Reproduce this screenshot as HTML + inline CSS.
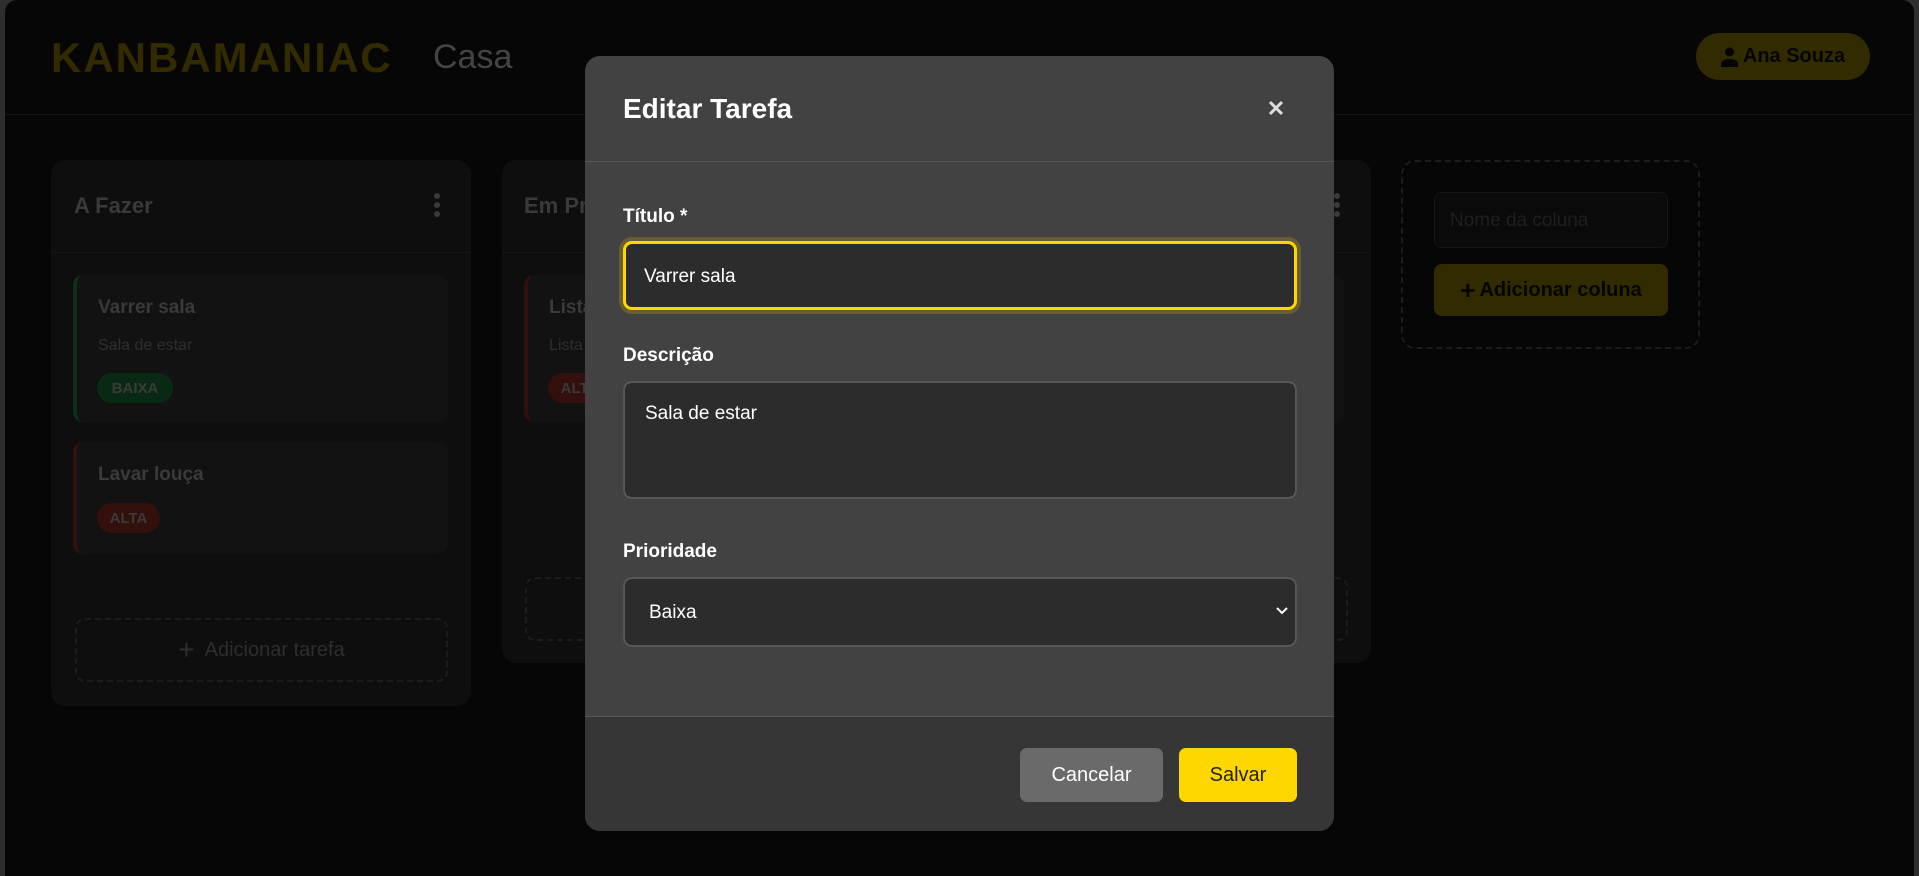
<!DOCTYPE html>
<html><head><meta charset="utf-8"><style>
*{box-sizing:border-box;margin:0;padding:0}
body{width:1919px;height:876px;background:#2e2e2e;font-family:"Liberation Sans",sans-serif;position:relative;overflow:hidden}
.app{position:absolute;left:5px;top:0;width:1909px;height:876px;background:#060606;border-radius:12px 12px 0 0}
.a{position:absolute}
.hline{left:5px;top:114px;width:1909px;height:1px;background:#121212}
.logo{left:51px;top:34px;font-size:42px;font-weight:bold;color:#332b00;letter-spacing:2px}
.casa{left:433px;top:38px;font-size:34px;color:#444}
.user{left:1696px;top:33px;width:174px;height:47px;border-radius:24px;background:#332b00;color:#050505;font-weight:bold;font-size:20px;display:flex;align-items:center;justify-content:center;gap:5px}
.col{background:#0e0e0e;border-radius:14px}
.ch{font-size:22px;font-weight:bold;color:#3a3a3a}
.dots{width:6px}
.dots i{display:block;width:6px;height:6px;border-radius:3px;background:#3a3a3a;margin-bottom:3px}
.div{height:1px;background:#151515}
.card{background:#121212;border-radius:10px;border-left:4px solid #08301a}
.ct{font-size:19px;font-weight:bold;color:#3a3a3a}
.cd{font-size:16px;color:#2e2e2e}
.badge{border-radius:15px;font-size:15px;font-weight:bold;color:#3a3a3a;display:flex;align-items:center;justify-content:center}
.dash{border:2px dashed #1c1c1c;border-radius:10px}
.modal{left:585px;top:56px;width:749px;height:775px;background:#424242;border-radius:15px;overflow:hidden}
.mfoot{left:0;top:660px;width:749px;height:115px;background:#363636;border-top:1px solid #555}
.lbl{font-size:19px;font-weight:bold;color:#fff}
.inp{background:#2c2c2c;border:2px solid #575757;border-radius:9px;color:#fff;font-size:19px}
.btn{border-radius:7px;font-size:20px;display:flex;align-items:center;justify-content:center}
</style></head><body>
<div class="app"></div>
<div class="a hline"></div>
<div class="a logo">KANBAMANIAC</div>
<div class="a casa">Casa</div>
<div class="a user"><svg width="17" height="20" viewBox="0 0 17 20"><circle cx="8.5" cy="5" r="4.5" fill="#050505"/><path d="M0 20v-3c0-3 3-5 8.5-5s8.5 2 8.5 5v3z" fill="#050505"/></svg>Ana Souza</div>

<div class="a col" style="left:51px;top:160px;width:420px;height:546px"></div>
<div class="a ch" style="left:74px;top:193px">A Fazer</div>
<div class="a dots" style="left:434px;top:193px"><i></i><i></i><i></i></div>
<div class="a div" style="left:51px;top:252px;width:420px"></div>
<div class="a card" style="left:73px;top:275px;width:375px;height:147px"></div>
<div class="a ct" style="left:98px;top:297px">Varrer sala</div>
<div class="a cd" style="left:98px;top:337px">Sala de estar</div>
<div class="a badge" style="left:97px;top:373px;width:76px;height:30px;background:#082a13">BAIXA</div>
<div class="a card" style="left:73px;top:442px;width:375px;height:112px;border-left-color:#33100c"></div>
<div class="a ct" style="left:98px;top:464px">Lavar louça</div>
<div class="a badge" style="left:97px;top:503px;width:63px;height:30px;background:#33100c">ALTA</div>
<div class="a dash" style="left:75px;top:618px;width:373px;height:64px;color:#2e2e2e;font-size:20px;display:flex;align-items:center;justify-content:center"><span style="font-size:28px;margin-right:10px">+</span>Adicionar tarefa</div>

<div class="a col" style="left:502px;top:160px;width:869px;height:503px"></div>
<div class="a ch" style="left:524px;top:193px">Em Progresso</div>
<div class="a dots" style="left:1334px;top:193px"><i></i><i></i><i></i></div>
<div class="a div" style="left:502px;top:252px;width:869px"></div>
<div class="a card" style="left:524px;top:275px;width:820px;height:147px;border-left-color:#33100c"></div>
<div class="a ct" style="left:549px;top:297px">Lista</div>
<div class="a cd" style="left:549px;top:337px">Lista</div>
<div class="a badge" style="left:548px;top:373px;width:63px;height:30px;background:#33100c">ALTA</div>
<div class="a dash" style="left:525px;top:577px;width:823px;height:64px"></div>

<div class="a dash" style="left:1401px;top:160px;width:299px;height:189px;border-radius:14px"></div>
<div class="a" style="left:1434px;top:192px;width:234px;height:56px;background:#0a0a0a;border:1px solid #161616;border-radius:8px;color:#1f1f1f;font-size:19px;padding:17px 15px">Nome da coluna</div>
<div class="a" style="left:1434px;top:264px;width:234px;height:52px;background:#332b00;border-radius:8px;color:#050505;font-weight:bold;font-size:20px;display:flex;align-items:center;justify-content:center"><span style="font-size:26px;margin-right:4px">+</span>Adicionar coluna</div>

<div class="a modal">
  <div class="a" style="left:38px;top:37px;font-size:28px;font-weight:bold;color:#fff">Editar Tarefa</div>
  <svg class="a" style="left:683px;top:44px" width="16" height="16" viewBox="0 0 16 16"><path d="M2 2L14 14M14 2L2 14" stroke="#ddd" stroke-width="3"/></svg>
  <div class="a" style="left:0;top:105px;width:749px;height:1px;background:#565656"></div>
  <div class="a lbl" style="left:38px;top:150px">Título *</div>
  <div class="a inp" style="left:38px;top:185px;width:674px;height:69px;border:3px solid #ffd700;box-shadow:0 0 0 4px rgba(255,215,0,0.2);padding:22px 18px">Varrer sala</div>
  <div class="a lbl" style="left:38px;top:289px">Descrição</div>
  <div class="a inp" style="left:38px;top:325px;width:674px;height:118px;padding:20px 20px">Sala de estar</div>
  <div class="a mfoot"></div>
  <div class="a lbl" style="left:38px;top:485px">Prioridade</div>
  <div class="a inp" style="left:38px;top:521px;width:674px;height:70px;padding:23px 24px">Baixa</div>
  <svg class="a" style="left:691px;top:551px" width="12" height="8" viewBox="0 0 12 8"><path d="M1 1L6 6L11 1" stroke="#fff" stroke-width="2" fill="none"/></svg>
  <div class="a btn" style="left:435px;top:692px;width:143px;height:54px;background:#6a6a6a;color:#fff">Cancelar</div>
  <div class="a btn" style="left:594px;top:692px;width:118px;height:54px;background:#ffd700;color:#222">Salvar</div>
</div>
</body></html>
